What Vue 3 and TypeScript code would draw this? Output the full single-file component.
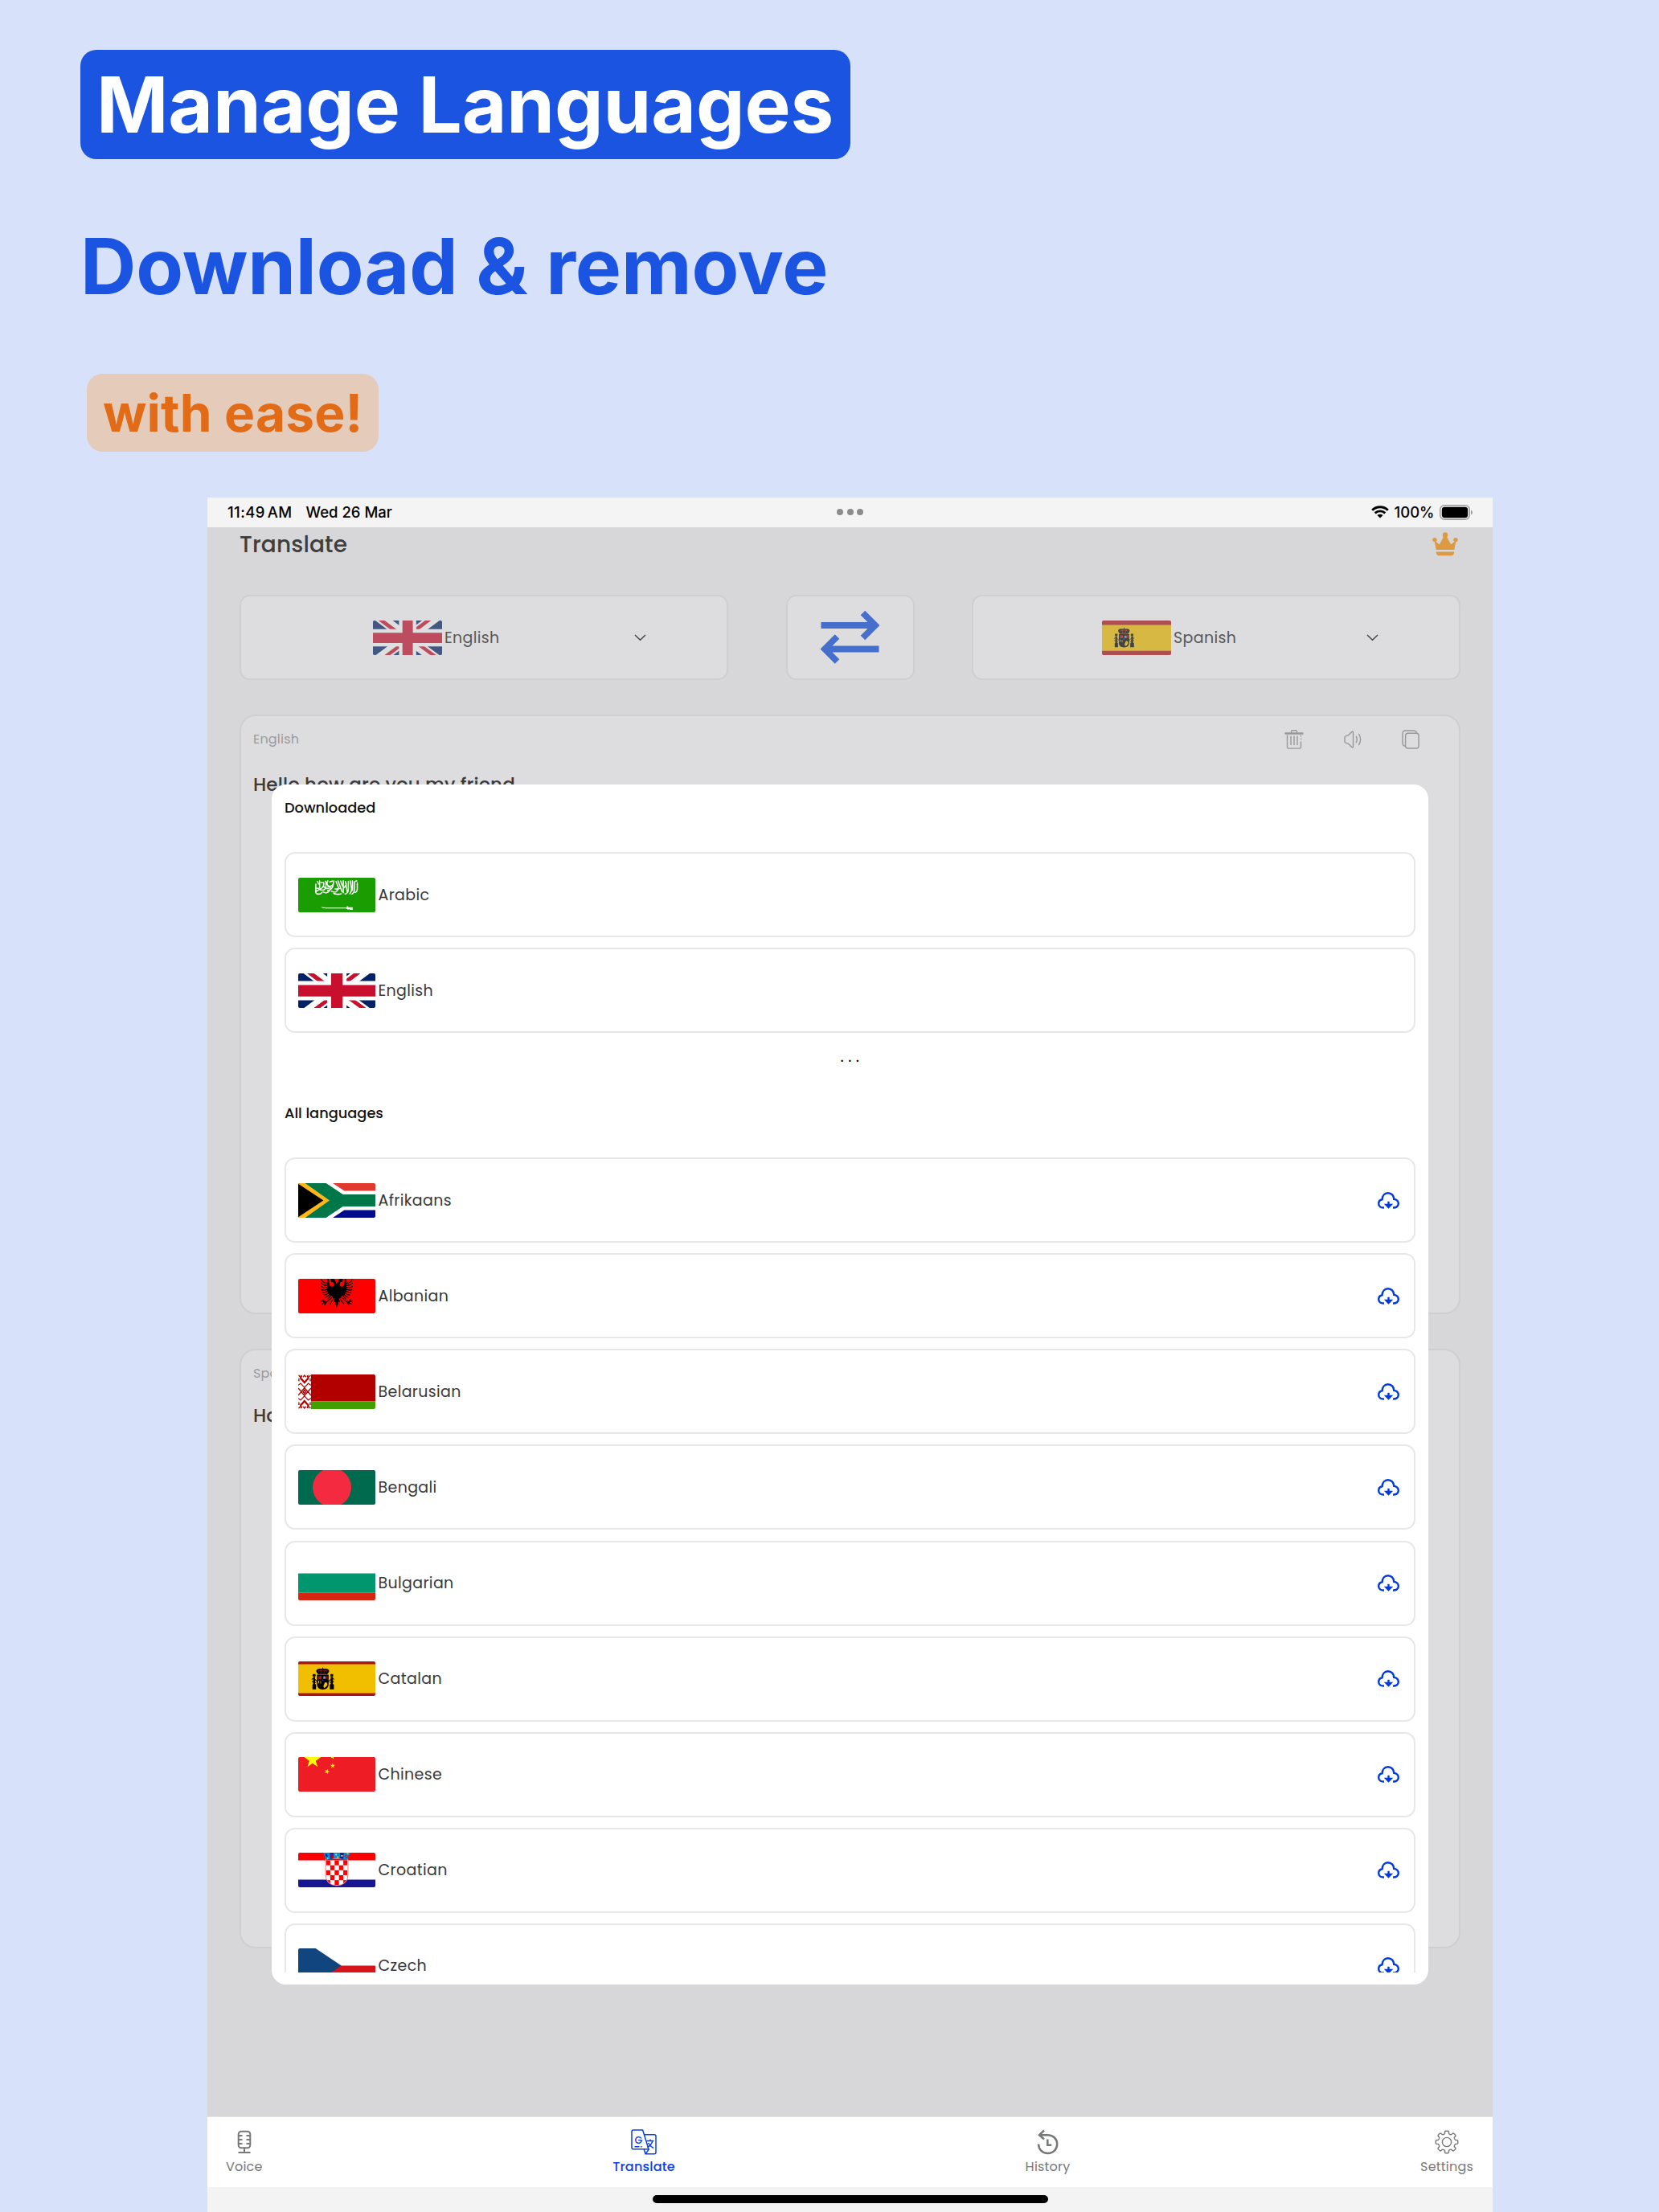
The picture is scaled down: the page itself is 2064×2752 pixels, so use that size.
<script setup lang="ts">
interface Language {
  name: string
  flag: string
}

const downloaded: Language[] = [
  { name: 'Arabic', flag: 'sa' },
  { name: 'English', flag: 'gb' },
]

const languages: Language[] = [
  { name: 'Afrikaans', flag: 'za' },
  { name: 'Albanian', flag: 'al' },
  { name: 'Belarusian', flag: 'by' },
  { name: 'Bengali', flag: 'bd' },
  { name: 'Bulgarian', flag: 'bg' },
  { name: 'Catalan', flag: 'es' },
  { name: 'Chinese', flag: 'cn' },
  { name: 'Croatian', flag: 'hr' },
  { name: 'Czech', flag: 'cz' },
]

// Red squares of the Croatian checkerboard: 5 columns by 6 rows.
const checks = Array.from({ length: 30 }, (_, i) => ({ c: i % 5, r: Math.floor(i / 5) })).filter(
  (k) => (k.c + k.r) % 2 === 0,
)

function star(cx: number, cy: number, r: number, turn = 0): string {
  return Array.from({ length: 10 }, (_, i) => {
    const a = ((i * 36 - 90 + turn) * Math.PI) / 180
    const d = i % 2 ? r * 0.382 : r
    return `${(cx + d * Math.cos(a)).toFixed(1)},${(cy + d * Math.sin(a)).toFixed(1)}`
  }).join(' ')
}

function gear(): string {
  let d = ''
  for (let i = 0; i < 8; i++) {
    const at = (r: number, deg: number) => {
      const a = ((i * 45 + deg - 90) * Math.PI) / 180
      return `${(15 + r * Math.cos(a)).toFixed(2)} ${(15 + r * Math.sin(a)).toFixed(2)}`
    }
    d += `${i ? 'L' : 'M'}${at(11, -13)}Q${at(13.8, -12)} ${at(13.8, -6)}L${at(13.8, 6)}Q${at(13.8, 12)} ${at(11, 13)}Q${at(9.6, 22.5)} ${at(11, 32)}`
  }
  return d + 'Z'
}
const gearPath = gear()
</script>

<template>
  <div class="page">
    <svg class="defs" aria-hidden="true">
      <symbol id="flag-gb" viewBox="0 0 640 480" preserveAspectRatio="xMidYMid slice">
        <path fill="#012169" d="M0 0h640v480H0z" />
        <path fill="#fff" d="m75 0 244 181L562 0h78v62L400 241l240 178v61h-80L320 301 81 480H0v-60l239-178L0 64V0z" />
        <path fill="#c8102e" d="m424 281 216 159v40L369 281zm-184 20 6 35L54 480H0zM640 0v3L391 191l2-44L590 0zM0 0l239 176h-60L0 42z" />
        <path fill="#fff" d="M241 0v480h160V0zM0 160v160h640V160z" />
        <path fill="#c8102e" d="M0 193v96h640v-96zM273 0v480h96V0z" />
      </symbol>
      <symbol id="flag-sa" viewBox="0 0 640 480" preserveAspectRatio="xMidYMid slice">
        <path fill="#199d00" d="M0 0h640v480H0z" />
        <g fill="none" stroke="#fff" stroke-width="10" stroke-linecap="round">
          <path d="M146 150v60q-2 22 18 20M160 128l10 22M178 124v52q0 24-34 34M190 138q26-12 22 14t-34 44q34 14 52-14v-52M226 126l12 18M246 122q-16 30 6 42t38-14M208 214q30 20 52-10t-14-34M262 132l22-8M296 122l-8 44q-10 30-44 38M276 208q42 22 60-24l-22-56M306 190l40-4M330 122l34 92M352 124l14 40M374 122v100M356 230q-36 12-62-6M392 128l16 92M416 126v66q0 34-28 40M432 124l10 60q4 24-14 46M450 122v80M466 132v66q-2 24-20 34M490 138v52q-2 26-18 28M158 232q26 4 40-14M400 148l-16 30M470 128l16-6M210 168q16 22 44 18M148 184l34 2M300 232l34 2" />
        </g>
        <path fill="#fff" d="M189 339q22 6 52 5h160l4-10h9l1 8h37v22h-24v-8l-15 6-18-11H244q-44 3-55-12z" />
      </symbol>
      <symbol id="flag-za" viewBox="0 0 640 480" preserveAspectRatio="xMidYMid slice">
        <path fill="#e1392d" d="M0 0h640v240H0z" />
        <path fill="#000c8a" d="M0 240h640v240H0z" />
        <path fill="#fff" d="M0 0h142l240 160h258v160H382L142 480H0z" />
        <path fill="#007749" d="M0 0h86l285 190h269v100H371L86 480H0z" />
        <path fill="#ffb81c" d="M0 56l260 184L0 424z" />
        <path d="M0 101l209 139L0 379z" />
      </symbol>
      <symbol id="flag-al" viewBox="0 0 640 480" preserveAspectRatio="xMidYMid slice">
        <path fill="red" d="M0 0h640v480H0z" />
        <g id="eagle-half">
          <path d="M321 140q-8-8-12-22l-10-20h-24l-14 8 18 6-8 10 18 2 8 20q0 16-14 18-18 2-24-14l-6-50h-10l-4 96 18 36 22 10 10 20 14-2-10 30 16-2-2 24 8 4 6 20h1z" />
          <g fill="none" stroke="#000" stroke-width="8" stroke-linecap="round">
            <path d="M246 132q-40 2-54-28M244 150q-34 4-54-18M242 168q-32 6-52-8M244 184q-28 10-50 4M246 198q-20 14-44 12M252 212q-16 18-40 20M260 224q-12 20-34 26M270 230q-6 22-24 34M276 256l-36 30-46-4M236 286l-38 20M236 286l-18 28M222 284l-18-14M288 270l-24 34" />
          </g>
        </g>
        <use href="#eagle-half" transform="matrix(-1 0 0 1 640 0)" />
      </symbol>
      <symbol id="flag-by" viewBox="0 0 640 480" preserveAspectRatio="xMidYMid slice">
        <path fill="#b20000" d="M0 0h640v318H0z" />
        <path fill="#429f00" d="M0 318h640v162H0z" />
        <path fill="#fff" d="M0 0h106v480H0z" />
        <g fill="none" stroke="#b20000" stroke-width="9">
          <path d="M52 208l28 32-28 32-28-32zM52 226l12 14-12 14-12-14zM0 210l26 30-26 30M106 210l-26 30 26 30" />
          <path d="M0 186l20-16 32 34 32-34 22 16M0 294l20 16 32-34 32 34 22-16" stroke-width="8" />
          <path d="M28 104q-16 26 4 36l20 24 20-24q20-10 4-36M28 376q-16-26 4-36l20-24 20 24q20 10 4 36" stroke-width="15" />
          <path d="M40 118l12-14 12 14M40 362l12 14 12-14M4 102l10 14M102 102l-10 14M4 378l10-14M102 378l-10-14M6 130v24M100 130v24M6 326v24M100 326v24" />
        </g>
      </symbol>
      <symbol id="flag-bd" viewBox="0 0 640 480" preserveAspectRatio="xMidYMid slice">
        <path fill="#006a4e" d="M0 0h640v480H0z" />
        <circle cx="280" cy="240" r="160" fill="#f42a41" />
      </symbol>
      <symbol id="flag-bg" viewBox="0 0 640 480" preserveAspectRatio="xMidYMid slice">
        <path fill="#fff" d="M0 0h640v160H0z" />
        <path fill="#00966e" d="M0 160h640v160H0z" />
        <path fill="#d62612" d="M0 320h640v160H0z" />
      </symbol>
      <symbol id="flag-es" viewBox="0 0 640 480" preserveAspectRatio="xMidYMid slice">
        <path fill="#aa151b" d="M0 0h640v480H0z" />
        <path fill="#f1bf00" d="M0 120h640v240H0z" />
        <path d="M201 146h6v10l10 2q26-4 38 10 4 10-2 18l-12 18h-76l-12-18q-6-8-2-18 12-14 38-10l12-2z" />
        <path fill="none" stroke="#ad1519" stroke-width="6" d="M166 178q38-18 76 0M176 198q28-8 56 0M186 166l4 22M222 166l-4 22" />
        <path d="M122 202h22v16l-4 4v62l8 4v40h-30v-38l6-6v-62l-6-6zM268 202h22v14l-2 6v62l8 6v38h-34v-40l8-4v-62l-4-6z" />
        <path fill="none" stroke="#000" stroke-width="7" d="M112 246q16-14 34 6t20 2M298 246q-16-14-34 6t-20 2M114 264l34 10M296 264l-34 10" />
        <path d="M156 206h96v82q0 38-48 42-48-4-48-42z" />
        <path fill="#ad1519" d="M168 218h26v26h-26zM234 218h10v24h-10z" />
        <path fill="#8c8c98" d="M208 220h20v22h-20z" />
        <path fill="#f1bf00" d="M166 256h7v22h-7zM184 258h5v24h-5zM220 272q20-6 22 12t-24 32q-12-2-8-20 8-12 10-24z" />
        <path fill="#0039f0" d="M200 246h10v12h-10z" />
        <path fill="none" stroke="#b8972a" stroke-width="4" d="M120 224h22M266 224h22" />
      </symbol>
      <symbol id="flag-cn" viewBox="0 0 640 480" preserveAspectRatio="xMidYMid slice">
        <path fill="#ee1c25" d="M0 0h640v480H0z" />
        <g fill="#ff0">
          <polygon :points="star(119, 120, 73)" />
          <polygon :points="star(287, 94, 21, 20)" />
          <polygon :points="star(286, 168, 21, 0)" />
          <polygon :points="star(239, 216, 23, 20)" />
        </g>
      </symbol>
      <symbol id="flag-hr" viewBox="0 0 640 480" preserveAspectRatio="xMidYMid slice">
        <path fill="#fff" d="M0 0h640v480H0z" />
        <path fill="red" d="M0 0h640v160H0z" />
        <path fill="#171796" d="M0 320h640v160H0z" />
        <clipPath id="shield"><path d="M230 140h180v134q0 88-90 92-90-4-90-92z" /></clipPath>
        <path fill="#fff" stroke="#ff6a6a" stroke-width="6" d="M227 150q93-20 186 0v124q0 92-93 96-93-4-93-96z" />
        <g clip-path="url(#shield)">
          <path fill="red" d="M228 146h184v14H228z" />
          <rect v-for="k in checks" :key="`${k.c}-${k.r}`" :x="230 + k.c * 36" :y="160 + k.r * 41" width="36" height="41" fill="red" />
        </g>
        <path fill="#0093dd" d="M208 98l26 60q86-28 172 0l26-60z" />
        <path fill="#171796" d="M262 98h32l-2 46-26 6zM346 98h32l-4 50-28-4zM222 112l14-8 10 22-12 8z" />
        <path stroke="red" stroke-width="8" d="M266 116h26M268 132h24M392 142l30-20M386 130l20-24" />
        <path fill="#ffe54a" d="M308 106h12v12h-12zM322 128h12v10h-12zM356 116h14v12h-14zM240 140h10v8h-10zM402 100h14v8h-14z" />
      </symbol>
      <symbol id="flag-cz" viewBox="0 0 640 480" preserveAspectRatio="xMidYMid slice">
        <path fill="#fff" d="M0 0h640v240H0z" />
        <path fill="#d7141a" d="M0 240h640v240H0z" />
        <path fill="#11457e" d="M0 0l358 240L0 480z" />
      </symbol>
    </svg>

    <header class="promo">
      <h1>Manage Languages</h1>
      <h2>Download &amp; remove</h2>
      <p>with ease!</p>
    </header>

    <main class="device">
      <div class="status">
        <div class="clock"><span class="time">11:49<i></i>AM</span><span class="date">Wed 26 Mar</span></div>
        <div class="dots"><i></i><i></i><i></i></div>
        <div class="power">
          <svg width="22" height="16" viewBox="0 0 22 16">
            <g fill="none" stroke="#000" stroke-width="2.9">
              <path d="M1.2 5.8a14 14 0 0 1 19.6 0M4.7 9.4a9 9 0 0 1 12.6 0" />
            </g>
            <path d="M11 15.6L7.4 12.1a5.2 5.2 0 0 1 7.2 0z" />
          </svg>
          <span>100%</span>
          <svg width="42" height="19" viewBox="0 0 42 19">
            <rect x=".7" y=".7" width="36.6" height="17.6" rx="5.5" fill="none" stroke="#9a9a9a" stroke-width="1.4" />
            <rect x="2.8" y="2.8" width="32.4" height="13.4" rx="3.6" />
            <path d="M39 6.4q2 1 2 3.1t-2 3.1z" fill="#9a9a9a" />
          </svg>
        </div>
      </div>

      <section class="screen">
        <div class="toolbar">
          <span class="title">Translate</span>
          <svg width="32" height="30" viewBox="0 0 32 30" fill="#de9a43">
            <circle cx="16" cy="3.4" r="3.2" /><circle cx="3" cy="9.6" r="2.7" /><circle cx="29" cy="9.6" r="2.7" />
            <path d="M2.4 10l5.2 4.6q1.2.8 2-.6L14.8 4h2.4l5.200 10q.8 1.400 2 .6L29.600 10l-2.300 12H4.700zM4.700 24.400h22.600q-.4 4.600-3.400 4.800H8.100q-3-.2-3.400-4.800z" />
          </svg>
        </div>

        <div class="pickers">
          <div class="picker from">
            <svg class="flag"><use href="#flag-gb" /></svg><span>English</span>
            <svg class="chev" width="15" height="9" viewBox="0 0 15 9"><path d="M1 1l6.500 6.200L14 1" /></svg>
          </div>
          <div class="swap">
            <svg width="73" height="66" viewBox="0 0 73 66" fill="none" stroke="#466ecc" stroke-width="7.800">
              <path d="M.5 18H67M52.500 2.500L68 18 52.500 33.500M72.500 47.500H6M20.500 32L5 47.500 20.500 63" />
            </svg>
          </div>
          <div class="picker to">
            <svg class="flag"><use href="#flag-es" /></svg><span>Spanish</span>
            <svg class="chev" width="15" height="9" viewBox="0 0 15 9"><path d="M1 1l6.500 6.200L14 1" /></svg>
          </div>
        </div>

        <article class="card">
          <div class="card-head">
            <span>English</span>
            <div class="actions">
              <svg width="24" height="24" viewBox="0 0 24 24">
                <path d="M.5 4h23M.5 5h23M8.500 4V2q0-1.300 1.300-1.300h4.400q1.300 0 1.300 1.300v2M3.500 6.500v15q0 1.600 1.600 1.600h13.800q1.600 0 1.600-1.600v-7M20.500 12V10.500M20.500 8.500V6.500M8 7.500v11.500M12 7.500v11.500M16 7.500v11.500" />
              </svg>
              <svg width="22" height="22" viewBox="0 0 22 22">
                <path d="M1 8.500q0-1.300 1.200-1.600l3-1L10 1.400q1.500-1 1.500.8v17.600q0 1.800-1.500.8L5.200 16.100l-3-1Q1 14.800 1 13.500zM15 6.800q2.600 4.200 0 8.400M18.400 3.800q4.400 7.200 0 14.400" />
              </svg>
              <svg width="22" height="24" viewBox="0 0 22 24">
                <rect x="4.600" y="4.200" width="16.500" height="18.800" rx="3" />
                <path d="M4.400 20.400Q1 19.600 1 16.500V4.800Q1 1 4.800 1h9.600q3.600 0 4.200 3" />
              </svg>
            </div>
          </div>
          <p class="hello">Hello how are you my friend</p>
        </article>

        <article class="card">
          <div class="card-head"><span>Spanish</span></div>
          <p class="hola">Hola</p>
        </article>
      </section>

      <section class="modal">
        <div class="list">
          <h3>Downloaded</h3>
          <div v-for="l in downloaded" :key="l.name" class="row">
            <svg class="flag"><use :href="`#flag-${l.flag}`" /></svg>
            <span>{{ l.name }}</span>
          </div>
          <div class="more">...</div>
          <h3 class="all">All languages</h3>
          <div v-for="l in languages" :key="l.name" class="row">
            <svg class="flag"><use :href="`#flag-${l.flag}`" /></svg>
            <span>{{ l.name }}</span>
            <svg class="cloud" width="27" height="21" viewBox="0 0 27 21">
              <path d="M8 19.500C3.800 19.800 1.200 17.800 1.200 14.500c0-2.600 1.700-4.800 4.400-5.200C5.700 4.600 8.600 1.200 12.800 1.200c4.300 0 7.400 3.200 7.500 7.700 3.400.6 5.500 2.800 5.500 5.600 0 3-2.600 5.200-6.800 5" />
              <path d="M13.500 11.800v6.600M10.600 16l2.900 3 2.900-3z" />
            </svg>
          </div>
        </div>
      </section>

      <nav class="tabs">
        <div class="tab voice">
          <svg width="18" height="30" viewBox="0 0 18 30">
            <rect x="1.700" y="1.700" width="14.600" height="20.600" rx="3.500" />
            <path d="M2 7h4.500M2 12h4.500M2 17h4.500M16 7h-4.500M16 12h-4.500M16 17h-4.500M9 22.500V28M1.500 28h15" />
          </svg>
          <span>Voice</span>
        </div>
        <div class="tab translate active">
          <svg width="32" height="32" viewBox="0 0 32 32">
            <path d="M3 1h11.600L22 24.800H3q-2 0-2-2V3q0-2 2-2zM16.200 6.800H29q2 0 2 2v20q0 2-2 2H18l-1.800-6M18 30.800l4.500-6M4.500 21.800h6M12 21.800h1.500" />
            <text x="4.600" y="17.600" font-size="12.500">G</text>
            <path d="M19.500 14.500h9M24 12.500v2M27 14.500q-1.800 5.500-6.600 8M21.500 17q2 4 6.500 6.500" />
          </svg>
          <span>Translate</span>
        </div>
        <div class="tab history">
          <svg width="28" height="32" viewBox="0 0 28 32">
            <path d="M9 1.500L3 7.200l6 5.300M3.500 7.200h9.700c7.200 0 12 5 12 11.400S20.400 30 13.500 30C7 30 2.300 25.500 2 18.500M13.300 12.500v7.300h5" />
          </svg>
          <span>History</span>
        </div>
        <div class="tab settings">
          <svg width="30" height="30" viewBox="0 0 30 30"><path :d="gearPath" /><circle cx="15" cy="15" r="5.600" /></svg>
          <span>Settings</span>
        </div>
      </nav>
      <div class="home"><i></i></div>
    </main>
  </div>
</template>

<style>
body {
  margin: 0;
}
</style>

<style scoped>
.page {
  box-sizing: border-box;
  width: 2064px;
  height: 2752px;
  overflow: hidden;
  background: #d7e1f9;
  font-family: Poppins, Inter, sans-serif;
}
.defs {
  position: absolute;
  width: 0;
  height: 0;
}
h1,
h2,
h3,
p {
  margin: 0;
}
.promo {
  box-sizing: border-box;
  height: 619px;
  padding: 62px 0 0 100px;
  display: flex;
  flex-direction: column;
  align-items: flex-start;
  font-family: Inter, sans-serif;
  white-space: nowrap;
}
h1 {
  box-sizing: border-box;
  width: 958px;
  height: 136px;
  padding-left: 20px;
  line-height: 136px;
  border-radius: 20px;
  background: #1a54e1;
  color: #fff;
  font-size: 96px;
  font-weight: 700;
  letter-spacing: -.1px;
}
h2 {
  height: 116px;
  margin-top: 75px;
  line-height: 116px;
  color: #1a54e1;
  font-size: 96px;
  font-weight: 700;
  letter-spacing: -.1px;
}
.promo p {
  box-sizing: border-box;
  width: 363px;
  height: 97px;
  margin: 76px 0 0 8px;
  padding-left: 20px;
  line-height: 97px;
  border-radius: 20px;
  background: #e5cbb9;
  color: #e26b17;
  font-size: 64px;
  font-weight: 700;
  letter-spacing: .15px;
}
.device {
  position: relative;
  display: flex;
  flex-direction: column;
  width: 1599px;
  height: 2133px;
  margin-left: 258px;
  background: #d7d7d9;
}
.status {
  display: grid;
  grid-template-columns: 1fr auto 1fr;
  align-items: center;
  box-sizing: border-box;
  height: 37px;
  padding: 0 24px 1px;
  background: #f4f4f4;
  color: #000;
  font-family: Inter, sans-serif;
  font-size: 18.5px;
  font-weight: 500;
}
.clock {
  display: flex;
  gap: 17px;
  padding-left: 1px;
}
.time {
  letter-spacing: .4px;
}
.time i {
  display: inline-block;
  width: 3px;
}
.dots {
  display: flex;
  gap: 4.500px;
}
.dots i {
  width: 8px;
  height: 8px;
  border-radius: 50%;
  background: #8c8c8c;
}
.power {
  display: flex;
  align-items: center;
  justify-content: flex-end;
  gap: 6.500px;
}
.screen {
  height: 1977px;
  box-sizing: border-box;
  padding: 0 40px;
}
.toolbar {
  display: flex;
  justify-content: space-between;
  height: 84px;
  padding-right: 3px;
}
.toolbar svg {
  margin-top: 6px;
}
.title {
  line-height: 43px;
  font-size: 28px;
  font-weight: 500;
  letter-spacing: .15px;
  color: #3d3e40;
}
.pickers {
  display: flex;
  justify-content: space-between;
}
.picker,
.swap,
.card {
  box-sizing: border-box;
  border: 2px solid #cfcfd1;
  background: #dddddf;
}
.picker,
.swap {
  display: flex;
  align-items: center;
  height: 106px;
  border-radius: 13px;
}
.picker {
  width: 608px;
  color: #56575a;
  font-size: 19px;
  letter-spacing: .35px;
}
.picker .flag {
  width: 86px;
  height: 43px;
  border-radius: 2px;
  background: #acacad;
}
.picker .flag use {
  opacity: .61;
}
.picker span {
  margin-left: 3px;
}
.from {
  padding-left: 164px;
}
.to {
  padding-left: 160px;
}
.chev {
  margin: 0 100px 0 auto;
  fill: none;
  stroke: #444547;
  stroke-width: 1.500;
}
.swap {
  justify-content: center;
  width: 160px;
}
.card {
  height: 746px;
  margin-top: 43px;
  padding: 0 49px 0 15px;
  border-radius: 20px;
}
.card-head {
  display: flex;
  align-items: center;
  justify-content: space-between;
  height: 57px;
  color: #9a9b9d;
  font-size: 16px;
  letter-spacing: .2px;
}
.actions {
  display: flex;
  align-items: center;
  gap: 50px;
}
.actions svg {
  fill: none;
  stroke: #97989a;
  stroke-width: 1.400;
}
.hello,
.hola {
  line-height: 30px;
  color: #3a3b3d;
  font-size: 23px;
  font-weight: 500;
  letter-spacing: .15px;
}
.hello {
  margin-top: 13px;
}
.hola {
  margin-top: 9px;
}
.modal {
  position: absolute;
  left: 80px;
  top: 357px;
  box-sizing: border-box;
  width: 1439px;
  height: 1493px;
  padding: 16px;
  border-radius: 18px;
  background: #fff;
}
.list {
  height: 1462px;
  overflow: hidden;
}
h3 {
  height: 26px;
  margin: 0 0 42px;
  line-height: 26px;
  color: #111;
  font-size: 17.800px;
  font-weight: 500;
}
.row {
  box-sizing: border-box;
  display: flex;
  align-items: center;
  height: 106px;
  margin-bottom: 13.100px;
  padding: 0 18px 0 15px;
  border: 2px solid #e7e7e8;
  border-radius: 13px;
  color: #37383a;
  font-size: 19px;
  letter-spacing: .35px;
}
.row .flag {
  width: 96px;
  height: 43px;
  margin-right: 3.500px;
  border-radius: 2px;
}
.cloud {
  margin-left: auto;
  fill: none;
  stroke: #0039e0;
  stroke-width: 2.400;
}
.more {
  height: 74px;
  padding-left: 5px;
  line-height: 32px;
  text-align: center;
  font-size: 20px;
  letter-spacing: 5.500px;
}
.tabs {
  display: flex;
  justify-content: space-between;
  box-sizing: border-box;
  height: 88px;
  padding: 15px 24px 0 23px;
  border-top: 1px solid #e4e4e5;
  background: #fff;
  color: #77787a;
  font-size: 16px;
  letter-spacing: .2px;
}
.tab {
  display: flex;
  flex-direction: column;
  align-items: center;
}
.tab svg {
  height: 32px;
  fill: none;
  stroke: #77787a;
  stroke-width: 2;
}
.tab span {
  line-height: 25px;
  margin-top: 2px;
}
.active {
  color: #0b40e4;
  font-weight: 500;
}
.tab.active svg {
  stroke: #0b40e4;
  stroke-width: 1.500;
}
.tab.active text {
  stroke: none;
  fill: #0b40e4;
}
.tab.history svg {
  stroke-width: 2.500;
}
.tab.settings svg {
  stroke-width: 1.400;
}
.home {
  display: flex;
  justify-content: center;
  height: 31px;
  background: #f3f3f3;
}
.home i {
  width: 492px;
  height: 10px;
  margin-top: 10px;
  border-radius: 5px;
  background: #000;
}
</style>
